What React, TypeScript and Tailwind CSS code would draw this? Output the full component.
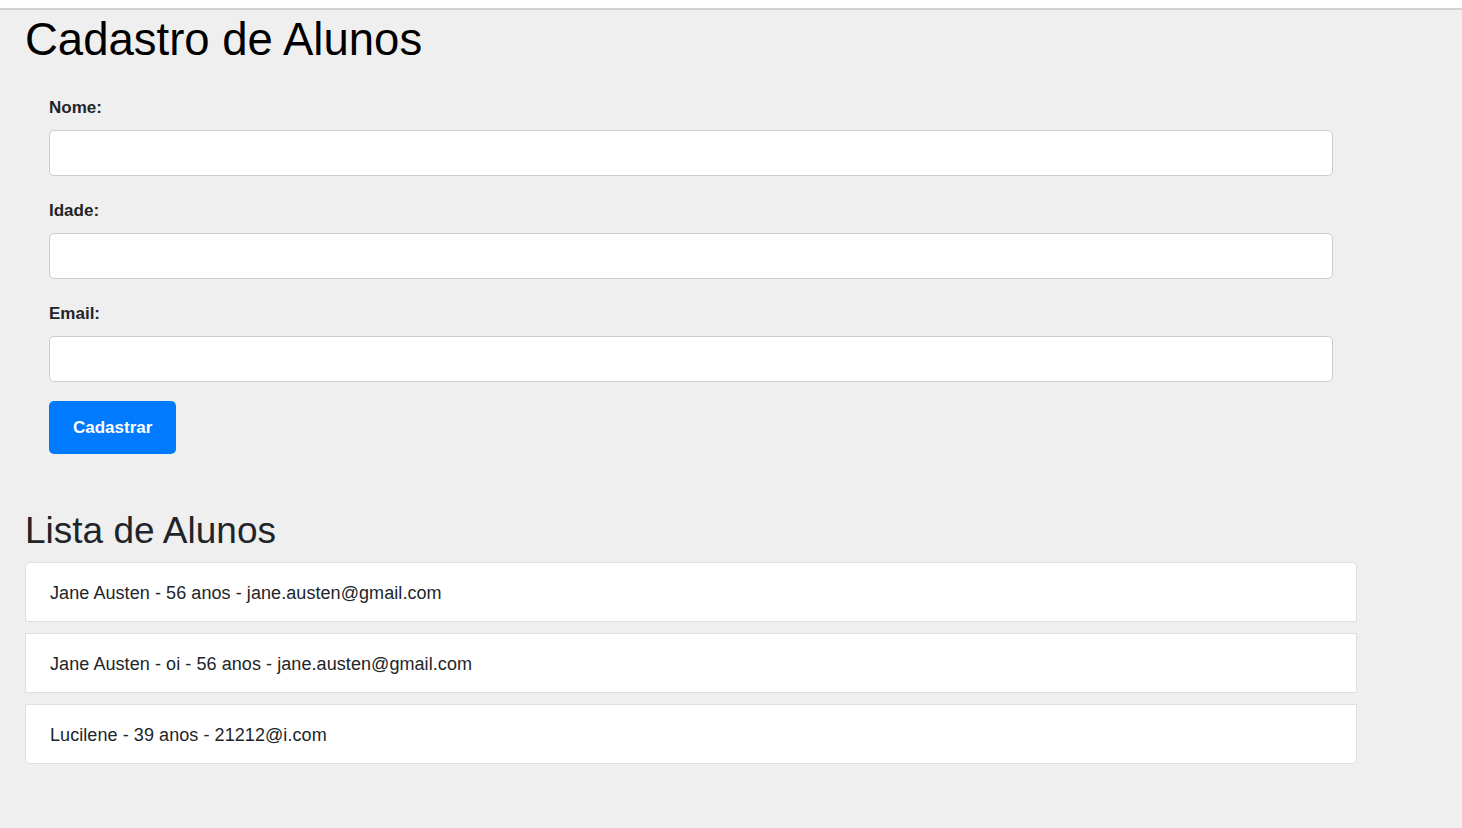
import { useState } from "react";

type Aluno = {
  id: number;
  nome: string;
  idade: string;
  email: string;
};

const App = () => {
  const [nome, setNome] = useState("");
  const [idade, setIdade] = useState("");
  const [email, setEmail] = useState("");
  const [alunos, setAlunos] = useState<Aluno[]>([
    { id: 1, nome: "Jane Austen", idade: "56", email: "jane.austen@gmail.com" },
    { id: 2, nome: "Jane Austen - oi", idade: "56", email: "jane.austen@gmail.com" },
    { id: 3, nome: "Lucilene", idade: "39", email: "21212@i.com" },
  ]);

  const handleSubmit = (e: React.FormEvent) => {
    e.preventDefault();
    if (!nome || !idade || !email) return;
    setAlunos([...alunos, { id: Date.now(), nome, idade, email }]);
    setNome("");
    setIdade("");
    setEmail("");
  };

  const inputClass =
    "block w-full h-[46px] bg-white border border-[#cccccc] rounded-[5px] px-3 text-[17px] outline-none";
  const labelClass = "block text-[17px] leading-6 font-bold text-[#212529] mb-[10px]";

  return (
    <div
      className="min-h-screen bg-[#efefef]"
      style={{ fontFamily: '"Liberation Sans", Arial, sans-serif' }}
    >
      <div className="h-[10px] bg-white border-b-2 border-[#d2d2d2]" />
      <main className="w-[1332px] ml-[25px] pb-16">
        <h1 className="text-[45.5px] leading-[54px] text-black mt-[3px] mb-[29px]">
          Cadastro de Alunos
        </h1>

        <form onSubmit={handleSubmit} className="px-6">
          <div className="mb-[23px]">
            <label className={labelClass}>Nome:</label>
            <input
              className={inputClass}
              type="text"
              value={nome}
              onChange={(e) => setNome(e.target.value)}
            />
          </div>
          <div className="mb-[23px]">
            <label className={labelClass}>Idade:</label>
            <input
              className={inputClass}
              type="number"
              value={idade}
              onChange={(e) => setIdade(e.target.value)}
            />
          </div>
          <div className="mb-[19px]">
            <label className={labelClass}>Email:</label>
            <input
              className={inputClass}
              type="email"
              value={email}
              onChange={(e) => setEmail(e.target.value)}
            />
          </div>
          <button
            type="submit"
            className="h-[53px] px-6 bg-[#007bff] text-white text-[17px] font-bold rounded-[5px]"
          >
            Cadastrar
          </button>
        </form>

        <h2 className="text-[37px] leading-[44px] text-[#212529] mt-[55px] mb-[9px]">
          Lista de Alunos
        </h2>
        <ul className="flex flex-col gap-[11px]">
          {alunos.map((aluno) => (
            <li
              key={aluno.id}
              className="bg-white border border-[#dfdfdf] first:rounded-t-[5px] last:rounded-b-[5px] px-6 pt-[17px] pb-[15px] text-[18px] leading-[26px] tracking-[0.07px] text-[#212529]"
            >
              {aluno.nome} - {aluno.idade} anos - {aluno.email}
            </li>
          ))}
        </ul>
      </main>
    </div>
  );
};

export default App;
